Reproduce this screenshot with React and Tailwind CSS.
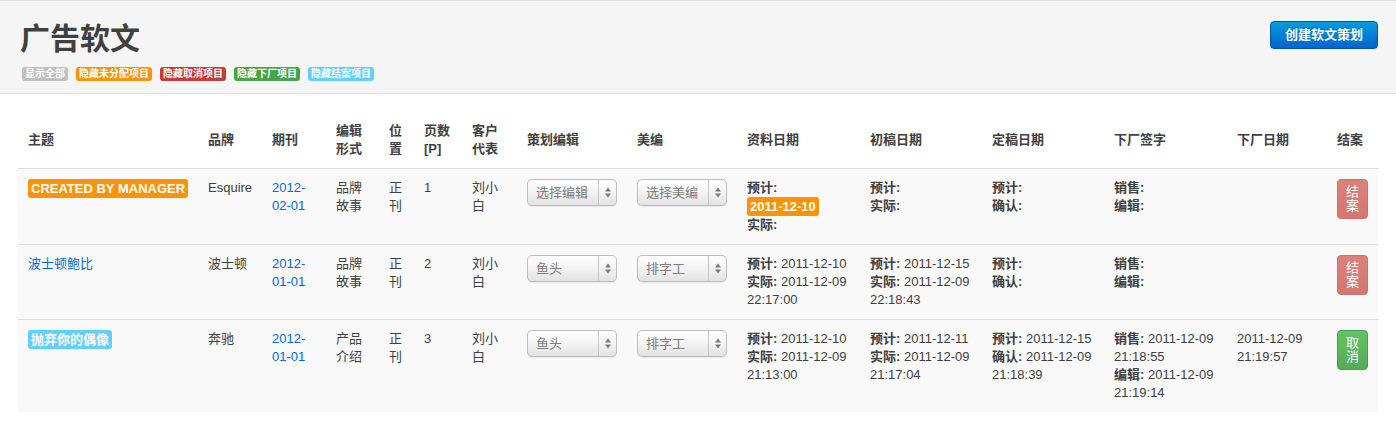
import React from "react";

const Arrows = () => (
  <svg width="6" height="11" viewBox="0 0 6 11">
    <polygon points="0,4.5 3,0.5 6,4.5" fill="#7a7a7a" />
    <polygon points="0,6.5 3,10.5 6,6.5" fill="#7a7a7a" />
  </svg>
);

const Select = ({ text }) => (
  <div className="flex h-[27px] w-[90px] items-stretch rounded-[5px] border border-[#bdbdbd] bg-linear-to-b from-white via-[#f3f3f3] to-[#e2e2e2] shadow-[0_1px_1px_rgba(0,0,0,0.08)]">
    <span className="flex-1 pl-[8px] text-[13px] leading-[25px] text-[#7d7d7d]">{text}</span>
    <span className="flex w-[18px] items-center justify-center border-l border-[#c6c6c6]">
      <Arrows />
    </span>
  </div>
);

const Label = ({ children, color }) => (
  <span className={`inline-block whitespace-nowrap rounded-[3px] px-[3px] text-[13px] font-bold leading-[19px] text-white uppercase ${color}`}>
    {children}
  </span>
);

const B = ({ children }) => <strong className="font-bold">{children}</strong>;

const CloseBtn = ({ kind }) =>
  kind === "red" ? (
    <button className="block w-[31px] rounded-[4px] border border-[#d0716c] bg-linear-to-b from-[#db827d] to-[#d3776f] px-[8px] py-[5px] text-[13px] leading-[14px] text-white">
      结<br />案
    </button>
  ) : (
    <button className="block w-[31px] rounded-[4px] border border-[#4a9d4a] bg-linear-to-b from-[#62c462] to-[#57a957] px-[8px] py-[5px] text-[13px] leading-[14px] text-white">
      取<br />消
    </button>
  );

const Td = ({ children }) => (
  <td className="border-t border-[#dddddd] px-[10px] py-[10px] align-top">{children}</td>
);

const A = ({ children }) => <a className="text-[#0069d6]">{children}</a>;

const TopLabel = ({ children, color }) => (
  <span className={`rounded-[3px] px-[3px] pb-[2px] pt-px text-[10px] font-bold leading-[11px] text-white ${color}`}>{children}</span>
);

export default function App() {
  const heads = [
    ["主题"],
    ["品牌"],
    ["期刊"],
    ["编辑", "形式"],
    ["位", "置"],
    ["页数", "[P]"],
    ["客户", "代表"],
    ["策划编辑"],
    ["美编"],
    ["资料日期"],
    ["初稿日期"],
    ["定稿日期"],
    ["下厂签字"],
    ["下厂日期"],
    ["结案"],
  ];
  return (
    <div className="min-h-[445px] bg-white font-['Liberation_Sans','Noto_Sans_CJK_SC',sans-serif] text-[13px] leading-[18px] text-[#404040]">
      <div className="flex h-[94px] justify-between border-y border-[#dddddd] bg-[#f5f5f5] px-[18px] pt-[20px]">
        <div className="pl-[2px]">
          <h1 className="text-[30px] font-bold leading-[36px] text-[#404040]">广告软文</h1>
          <div className="mt-[10px] flex gap-[8px] pl-[2px]">
            <TopLabel color="bg-[#bfbfbf]">显示全部</TopLabel>
            <TopLabel color="bg-[#f89406]">隐藏未分配项目</TopLabel>
            <TopLabel color="bg-[#c43c35]">隐藏取消项目</TopLabel>
            <TopLabel color="bg-[#46a546]">隐藏下厂项目</TopLabel>
            <TopLabel color="bg-[#62cffc]">隐藏结案项目</TopLabel>
          </div>
        </div>
        <div>
          <button className="rounded-[4px] border border-[#0055b3] bg-linear-to-b from-[#049cdb] to-[#0064cd] px-[14px] py-[4px] text-[13px] font-bold leading-[18px] text-white [text-shadow:0_-1px_0_rgba(0,0,0,0.25)]">
            创建软文策划
          </button>
        </div>
      </div>

      <div className="px-[18px] pt-[18px]">
        <table className="w-[1360px] table-fixed border-collapse">
          <colgroup>
            <col className="w-[180px]" />
            <col className="w-[64px]" />
            <col className="w-[64px]" />
            <col className="w-[53px]" />
            <col className="w-[35px]" />
            <col className="w-[48px]" />
            <col className="w-[55px]" />
            <col className="w-[110px]" />
            <col className="w-[110px]" />
            <col className="w-[123px]" />
            <col className="w-[122px]" />
            <col className="w-[122px]" />
            <col className="w-[123px]" />
            <col className="w-[100px]" />
            <col className="w-[51px]" />
          </colgroup>
          <thead>
            <tr>
              {heads.map((h, i) => (
                <th key={i} className="px-[10px] py-[10px] text-left align-middle font-bold">
                  {h.map((l, j) => (
                    <div key={j}>{l}</div>
                  ))}
                </th>
              ))}
            </tr>
          </thead>
          <tbody className="bg-[#f9f9f9]">
            <tr>
              <Td><Label color="bg-[#f89406]">Created by manager</Label></Td>
              <Td>Esquire</Td>
              <Td><A>2012-<br />02-01</A></Td>
              <Td>品牌<br />故事</Td>
              <Td>正<br />刊</Td>
              <Td>1</Td>
              <Td>刘小<br />白</Td>
              <Td><Select text="选择编辑" /></Td>
              <Td><Select text="选择美编" /></Td>
              <Td>
                <div><B>预计:</B></div>
                <div><Label color="bg-[#f89406]">2011-12-10</Label></div>
                <div><B>实际:</B></div>
              </Td>
              <Td><B>预计:</B><br /><B>实际:</B></Td>
              <Td><B>预计:</B><br /><B>确认:</B></Td>
              <Td><B>销售:</B><br /><B>编辑:</B></Td>
              <Td></Td>
              <Td><CloseBtn kind="red" /></Td>
            </tr>
            <tr>
              <Td><A>波士顿鲍比</A></Td>
              <Td>波士顿</Td>
              <Td><A>2012-<br />01-01</A></Td>
              <Td>品牌<br />故事</Td>
              <Td>正<br />刊</Td>
              <Td>2</Td>
              <Td>刘小<br />白</Td>
              <Td><Select text="鱼头" /></Td>
              <Td><Select text="排字工" /></Td>
              <Td><B>预计:</B> 2011-12-10<br /><B>实际:</B> 2011-12-09<br />22:17:00</Td>
              <Td><B>预计:</B> 2011-12-15<br /><B>实际:</B> 2011-12-09<br />22:18:43</Td>
              <Td><B>预计:</B><br /><B>确认:</B></Td>
              <Td><B>销售:</B><br /><B>编辑:</B></Td>
              <Td></Td>
              <Td><CloseBtn kind="red" /></Td>
            </tr>
            <tr>
              <Td><Label color="bg-[#62cffc]">抛弃你的偶像</Label></Td>
              <Td>奔驰</Td>
              <Td><A>2012-<br />01-01</A></Td>
              <Td>产品<br />介绍</Td>
              <Td>正<br />刊</Td>
              <Td>3</Td>
              <Td>刘小<br />白</Td>
              <Td><Select text="鱼头" /></Td>
              <Td><Select text="排字工" /></Td>
              <Td><B>预计:</B> 2011-12-10<br /><B>实际:</B> 2011-12-09<br />21:13:00</Td>
              <Td><B>预计:</B> 2011-12-11<br /><B>实际:</B> 2011-12-09<br />21:17:04</Td>
              <Td><B>预计:</B> 2011-12-15<br /><B>确认:</B> 2011-12-09<br />21:18:39</Td>
              <Td><B>销售:</B> 2011-12-09<br />21:18:55<br /><B>编辑:</B> 2011-12-09<br />21:19:14</Td>
              <Td>2011-12-09<br />21:19:57</Td>
              <Td><CloseBtn kind="green" /></Td>
            </tr>
          </tbody>
        </table>
      </div>
    </div>
  );
}
